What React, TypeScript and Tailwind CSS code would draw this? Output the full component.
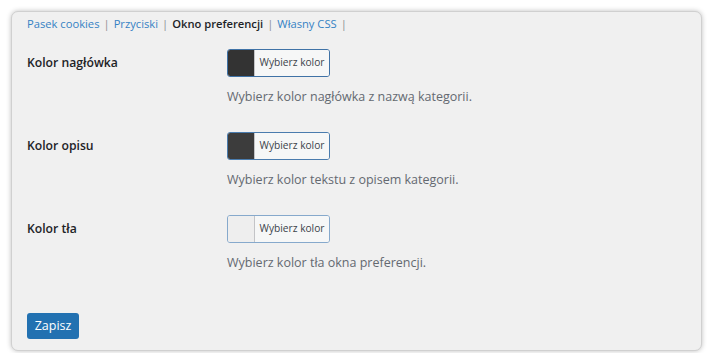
import React from "react"

const rows = [
  { label: "Kolor nagłówka", swatch: "bg-[#333333]", border: "border-[#3f72a6]", desc: "Wybierz kolor nagłówka z nazwą kategorii." },
  { label: "Kolor opisu", swatch: "bg-[#3c3c3c]", border: "border-[#4a7cae]", desc: "Wybierz kolor tekstu z opisem kategorii." },
  { label: "Kolor tła", swatch: "bg-[#eeeeee]", border: "border-[#86a9cc]", desc: "Wybierz kolor tła okna preferencji." },
]

function ColorRow({ label, swatch, border, desc }: (typeof rows)[number]) {
  return (
    <div className="flex">
      <div className="w-[200px] pt-[6px] text-[12.2px] font-semibold leading-[16px] text-[#1d2327]">{label}</div>
      <div className="flex flex-col">
        <div className={`flex h-[28px] w-[103px] overflow-hidden rounded-[3px] border ${border}`}>
          <span className={`w-[27px] shrink-0 border-r border-[#c3c4c7] ${swatch}`} />
          <span className="flex flex-1 items-center justify-center bg-[#f6f7f7] text-[10.2px] text-[#3c434a]">
            Wybierz kolor
          </span>
        </div>
        <p className="mt-[10px] text-[12.5px] leading-[20px] text-[#646970]">{desc}</p>
      </div>
    </div>
  )
}

export default function App() {
  return (
    <div className="h-[353px] w-[712px] overflow-hidden bg-white pl-[11px] pt-[11px] font-['Open_Sans',sans-serif]">
      <div className="h-[340px] w-[691px] rounded-[7px] border border-[#d0d0d0] bg-[#f0f0f0] pl-[15px] shadow-[0_0_5px_rgba(0,0,0,0.25)]">
        <nav className="mt-[4px] flex items-center gap-[4px] text-[11.2px] leading-[16px] text-[#8c8f94]">
          <a className="text-[#3582c4]">Pasek cookies</a>
          <span>|</span>
          <a className="text-[#3582c4]">Przyciski</a>
          <span>|</span>
          <span className="font-semibold text-[#1d2327]">Okno preferencji</span>
          <span>|</span>
          <a className="text-[#3582c4]">Własny CSS</a>
          <span>|</span>
        </nav>
        <div className="mt-[17px] flex flex-col gap-[25px]">
          {rows.map((r) => (
            <ColorRow key={r.label} {...r} />
          ))}
        </div>
        <button className="mt-[40px] h-[26px] w-[52px] rounded-[3px] bg-[#2271b1] text-[12.5px] text-white">
          Zapisz
        </button>
      </div>
    </div>
  )
}
